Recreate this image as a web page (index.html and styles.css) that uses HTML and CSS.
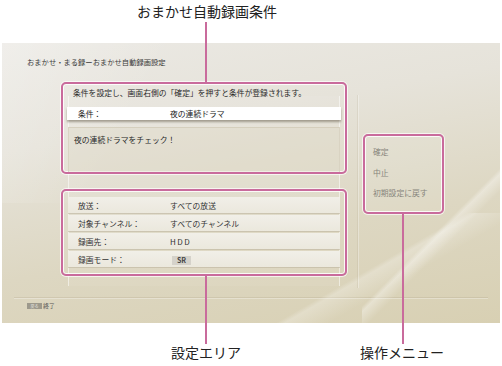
FILE: index.html
```html
<!DOCTYPE html>
<html lang="ja">
<head>
<meta charset="utf-8">
<link rel="stylesheet" href="styles.css">
</head>
<body>
<div class="page">
  <header class="top">
    <div class="callout-title">おまかせ自動録画条件</div>
  </header>
  <section class="screen">
    <div class="streak s1"></div>
    <div class="streak s2"></div>
    <div class="streak s3"></div>
    <div class="crumb">おまかせ・まる録ーおまかせ自動録画設定</div>
    <div class="main">
      <div class="col">
        <div class="panel"></div>
        <div class="box box-cond">
          <p class="note">条件を設定し、画面右側の「確定」を押すと条件が登録されます。</p>
          <div class="cond-bar"><span class="lbl">条件：</span><span class="val">夜の連続ドラマ</span></div>
          <div class="memo">夜の連続ドラマをチェック！</div>
        </div>
        <div class="box box-set">
          <div class="row"><span class="lbl">放送：</span><span class="val">すべての放送</span></div>
          <div class="row"><span class="lbl">対象チャンネル：</span><span class="val">すべてのチャンネル</span></div>
          <div class="row"><span class="lbl">録画先：</span><span class="val hdd">HDD</span></div>
          <div class="row"><span class="lbl">録画モード：</span><span class="val"><span class="badge">SR</span></span></div>
        </div>
      </div>
      <div class="divider"></div>
      <div class="box box-menu">
        <div class="item">確定</div>
        <div class="item">中止</div>
        <div class="item">初期設定に戻す</div>
      </div>
    </div>
    <div class="rule"></div>
    <div class="foot"><span class="key">戻る</span><span class="foot-txt">終了</span></div>
  </section>
  <footer class="labels">
    <div class="label l1">設定エリア</div>
    <div class="label l2">操作メニュー</div>
  </footer>
</div>
</body>
</html>
```
FILE: styles.css
```css
* { box-sizing: border-box; margin: 0; padding: 0; }
html, body { width: 502px; height: 366px; background: #fff; overflow: hidden; }
body {
  font-family: "Noto Sans CJK JP", "Noto Sans", sans-serif;
  color: #333;
}
.page { width: 502px; height: 366px; }

.top { height: 43px; }
.callout-title {
  margin-left: 107px;
  width: 200px;
  padding-top: 3px;
  text-align: center;
  font-size: 14px;
  line-height: 16px;
  color: #222;
}

.screen {
  position: relative;
  margin-left: 2px;
  width: 498px;
  height: 280px;
  overflow: visible;
  background: linear-gradient(170deg, #ebe9e4 0%, #e6e3da 30%, #ddd7c2 65%, #d8d0b3 100%);
}
.streak {
  position: absolute;
  pointer-events: none;
}
.s1 {
  left: 360px; top: 120px; width: 138px; height: 160px;
  background: linear-gradient(135deg, transparent 48%, rgba(255,255,255,0.35) 50%, transparent 56%);
}
.s2 {
  left: 240px; top: 170px; width: 258px; height: 110px;
  background: linear-gradient(150deg, transparent 50%, rgba(255,255,255,0.25) 52%, transparent 62%);
}
.s3 {
  left: 0; top: 0; width: 200px; height: 160px;
  background: linear-gradient(120deg, rgba(255,255,255,0.25) 0%, transparent 60%);
}

.crumb {
  position: relative;
  padding: 15px 0 0 25px;
  font-size: 7.3px;
  line-height: 8px;
  color: #3a3a3a;
  white-space: nowrap;
}

.main {
  position: relative;
  display: flex;
  align-items: flex-start;
  margin-top: 16px;
}
.col {
  position: relative;
  margin-left: 59px;
  width: 286px;
  display: flex;
  flex-direction: column;
  gap: 15px;
}
.panel {
  position: absolute;
  left: 7px; right: 7px; top: 14px; bottom: -10px;
  border-left: 1px solid rgba(255,255,255,0.5);
  border-right: 1px solid rgba(255,255,255,0.5);
  background: rgba(255,255,255,0.06);
}

.box {
  position: relative;
  border: 2px solid #c96b9c;
  border-radius: 5px;
  box-shadow: inset 0 0 0 1px rgba(255,255,255,0.85), 0 0 0 1px rgba(255,255,255,0.7);
}

.box-cond { height: 92px; padding: 4px 4px 0 4px; }
.box-cond::before {
  content: "";
  position: absolute;
  left: 142px;
  top: -62px;
  width: 2px;
  height: 60px;
  background: #c96b9c;
}
.note {
  margin-left: 6px;
  font-size: 7.8px;
  line-height: 10px;
  white-space: nowrap;
  color: #2a2a2a;
}
.cond-bar {
  display: flex;
  margin-top: 9px;
  height: 13px;
  padding-left: 11px;
  align-items: center;
  background: #fff;
  box-shadow: 0 2px 2px rgba(80,70,50,0.45);
  font-size: 7.8px;
  color: #222;
}
.lbl { width: 92px; flex: none; white-space: nowrap; }
.val { white-space: nowrap; }
.memo {
  margin: 7px 1px 0 1px;
  height: 45px;
  padding: 7px 0 0 5px;
  font-size: 7.8px;
  line-height: 10px;
  background: rgba(220,214,196,0.35);
  border: 1px solid rgba(200,192,170,0.5);
  border-bottom: none;
  color: #2a2a2a;
}

.box-set {
  height: 87px;
  padding: 6px 5px 0 5px;
  display: flex;
  flex-direction: column;
  gap: 2px;
}
.box-set::after {
  content: "";
  position: absolute;
  left: 142px;
  top: calc(100% + 2px);
  width: 2px;
  height: 68px;
  background: #c96b9c;
  z-index: 2;
}
.row {
  display: flex;
  align-items: center;
  height: 16px;
  padding-left: 10px;
  font-size: 7.8px;
  color: #333;
  background: linear-gradient(#f1efe8, #ebe8dd);
  box-shadow: 0 1px 0 rgba(190,182,160,0.6);
}
.hdd { letter-spacing: 1.5px; font-size: 8px; }
.badge {
  display: inline-block;
  padding: 0 5px 0 5px;
  height: 9px;
  line-height: 9px;
  background: #d5d2ca;
  font-size: 7px;
  font-weight: bold;
  color: #444;
  margin-left: 2px;
}

.divider {
  margin-left: 10px;
  margin-top: 13px;
  width: 1px;
  height: 193px;
  background: rgba(170,160,135,0.18);
  box-shadow: 1px 0 0 rgba(255,255,255,0.3);
  flex: none;
}

.box-menu {
  margin-left: 5px;
  margin-top: 52px;
  width: 81px;
  height: 80px;
  padding: 6px 0 0 8px;
  background: rgba(255,255,255,0.06);
}
.box-menu::after {
  content: "";
  position: absolute;
  left: 37px;
  top: calc(100% + 2px);
  width: 2px;
  height: 130px;
  background: #c96b9c;
  z-index: 2;
}
.item {
  font-size: 7.8px;
  line-height: 20.5px;
  color: #87857c;
  white-space: nowrap;
}

.rule {
  margin: 9px 12px 0 12px;
  height: 1px;
  background: rgba(170,160,130,0.25);
  box-shadow: 0 1px 0 rgba(255,255,255,0.3);
}
.foot {
  position: relative;
  display: flex;
  align-items: center;
  margin: 5px 0 0 25px;
  height: 6px;
}
.key {
  display: inline-block;
  width: 15px;
  height: 6px;
  line-height: 6px;
  background: #9d998c;
  color: #e8e6e0;
  font-size: 4px;
  text-align: center;
}
.foot-txt {
  margin-left: 1px;
  font-size: 6px;
  line-height: 6px;
  color: #555;
}

.labels {
  display: flex;
  padding-top: 21px;
}
.label {
  font-size: 14px;
  line-height: 16px;
  color: #222;
  text-align: center;
  width: 90px;
  white-space: nowrap;
}
.l1 { margin-left: 161px; }
.l2 { margin-left: 106px; }
```
